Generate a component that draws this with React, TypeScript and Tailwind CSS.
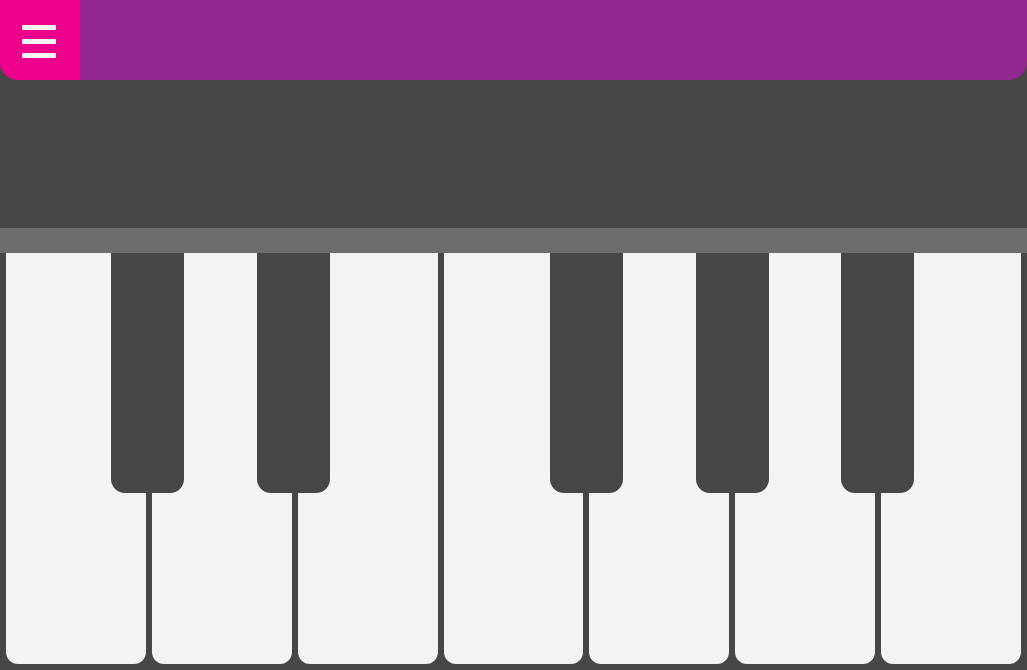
import React from "react";

export default function App() {
  const whites = Array.from({ length: 7 });
  const blackLefts = [111, 257, 550, 696, 841];
  return (
    <div className="w-[1027px] h-[670px] bg-[#464646] flex flex-col overflow-hidden" style={{ fontFamily: "Roboto, sans-serif" }}>
      <div className="h-[80px] flex shrink-0">
        <button className="w-[80px] h-[80px] bg-[#ec008c] rounded-bl-[18px] flex flex-col items-center justify-center gap-[9px] pr-[2px] pt-[2px]">
          <span className="block w-[34px] h-[5px] rounded-[1px] bg-[#f4f4f4]" />
          <span className="block w-[34px] h-[5px] rounded-[1px] bg-[#f4f4f4]" />
          <span className="block w-[34px] h-[5px] rounded-[1px] bg-[#f4f4f4]" />
        </button>
        <div className="flex-1 bg-[#92278f] rounded-br-[18px]" />
      </div>
      <div className="h-[148px] shrink-0" />
      <div className="h-[25px] bg-[#6d6d6d] shrink-0" />
      <div className="relative flex-1 flex gap-[6px] px-[6px] pb-[6px]">
        {whites.map((_, i) => (
          <div key={i} className="flex-1 bg-[#f3f3f3] rounded-b-[12px]" />
        ))}
        {blackLefts.map((l) => (
          <div
            key={l}
            className="absolute top-0 w-[73px] h-[240px] bg-[#464646] rounded-b-[14px]"
            style={{ left: l }}
          />
        ))}
      </div>
    </div>
  );
}
